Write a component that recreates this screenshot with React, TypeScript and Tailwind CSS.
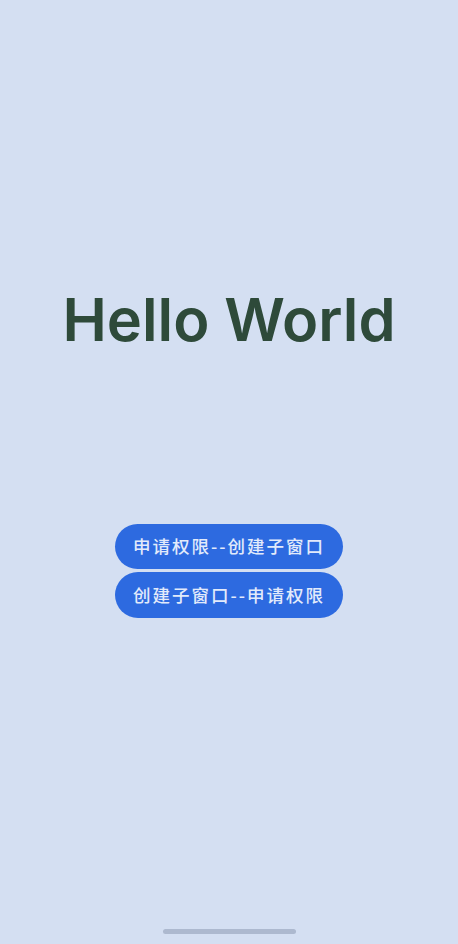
import React from "react";

export default function App() {
  return (
    <div className="w-[458px] h-[944px] bg-[#d4dff2] flex flex-col items-center overflow-hidden" style={{ fontFamily: '"Noto Sans", "Noto Sans CJK SC", sans-serif' }}>
      <div className="mt-[283px] h-[74px] flex items-center justify-center text-[59.5px] leading-none text-[#2e4a3a] tracking-[0px]" style={{ fontFamily: 'Inter, "Noto Sans", sans-serif', fontWeight: 600 }}>
        Hello World
      </div>
      <div className="mt-[167px] flex flex-col items-center gap-[3px]" style={{ fontFamily: '"Noto Sans CJK SC", sans-serif' }}>
        <button className="w-[228px] h-[45px] rounded-full bg-[#2d6ae0] text-[#e2eafb] text-[17.5px] font-medium tracking-[2px] flex items-center justify-center">申请权限--创建子窗口</button>
        <button className="w-[228px] h-[46px] rounded-full bg-[#2d6ae0] text-[#e2eafb] text-[17.5px] font-medium tracking-[2px] flex items-center justify-center">创建子窗口--申请权限</button>
      </div>
      <div className="flex-1" />
      <div className="mb-[10px] w-[133px] h-[5px] rounded-full bg-[#adb9cf]" />
    </div>
  );
}
